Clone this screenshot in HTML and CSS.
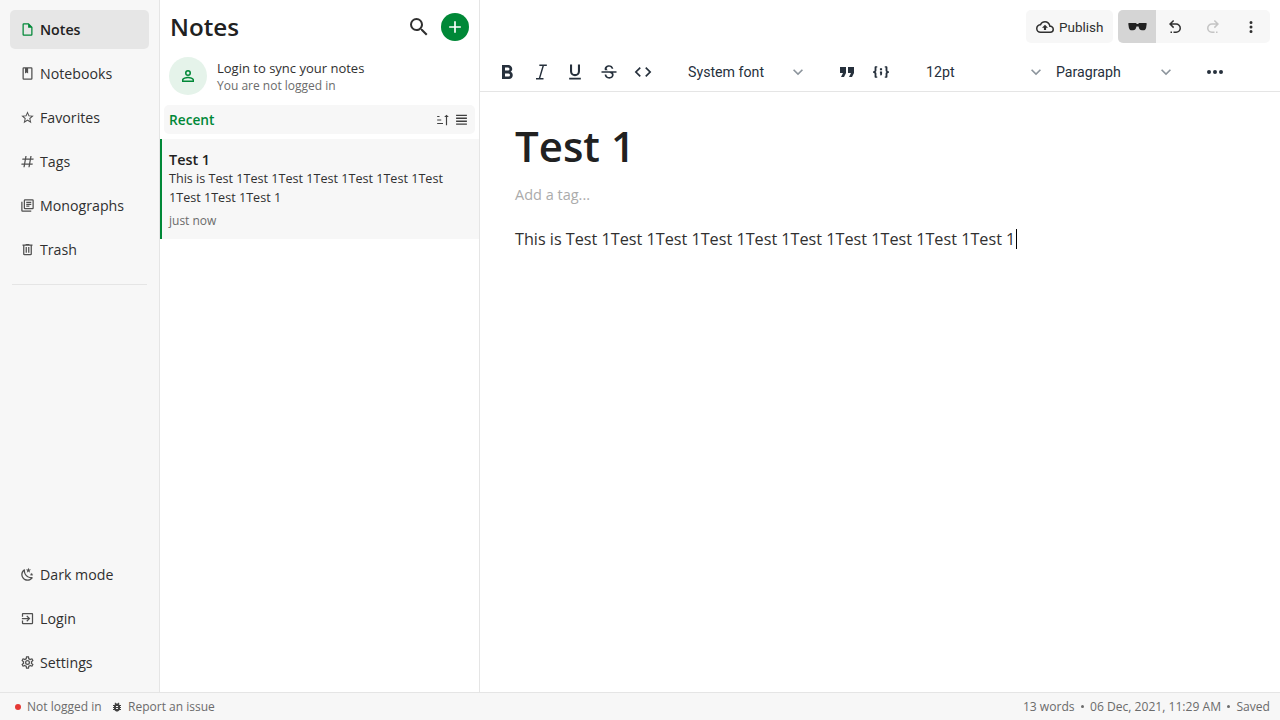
FILE: index.html
```html
<!DOCTYPE html>
<html lang="en">
<head>
<meta charset="utf-8">
<title>Notes</title>
<link rel="stylesheet" href="styles.css">
</head>
<body>
<div class="app">
  <div class="main">
    <nav class="nav">
      <a class="nav-item active"><svg class="nav-icon" viewBox="0 0 24 24"><path d="M14,2H6A2,2 0 0,0 4,4V20A2,2 0 0,0 6,22H18A2,2 0 0,0 20,20V8L14,2M18,20H6V4H13V9H18V20Z"/></svg><span>Notes</span></a>
      <a class="nav-item"><svg class="nav-icon" viewBox="0 0 24 24"><path d="M18,2H6A2,2 0 0,0 4,4V20A2,2 0 0,0 6,22H18A2,2 0 0,0 20,20V4A2,2 0 0,0 18,2M18,20H6V4H8V12L10.5,10.5L13,12V4H18V20Z"/></svg><span>Notebooks</span></a>
      <a class="nav-item"><svg class="nav-icon" viewBox="0 0 24 24"><path d="M12,15.39L8.24,17.66L9.23,13.38L5.91,10.5L10.29,10.13L12,6.09L13.71,10.13L18.09,10.5L14.77,13.38L15.76,17.66M22,9.24L14.81,8.63L12,2L9.19,8.63L2,9.24L7.45,13.97L5.82,21L12,17.27L18.18,21L16.54,13.97L22,9.24Z"/></svg><span>Favorites</span></a>
      <a class="nav-item"><svg class="nav-icon" viewBox="0 0 24 24"><path d="M5.41,21L6.12,17H2.12L2.47,15H6.47L7.53,9H3.53L3.88,7H7.88L8.59,3H10.59L9.88,7H15.88L16.59,3H18.59L17.88,7H21.88L21.53,9H17.53L16.47,15H20.47L20.12,17H16.12L15.41,21H13.41L14.12,17H8.12L7.41,21H5.41M9.53,9L8.47,15H14.47L15.53,9H9.53Z"/></svg><span>Tags</span></a>
      <a class="nav-item"><svg class="nav-icon" viewBox="0 0 24 24"><path d="M20 2H8A2 2 0 0 0 6 4V16A2 2 0 0 0 8 18H20A2 2 0 0 0 22 16V4A2 2 0 0 0 20 2M20 16H8V4H20V16M4 6H2V20A2 2 0 0 0 4 22H18V20H4V6M10 6H18V8H10V6M10 9H18V11H10V9M10 12H15V14H10V12Z"/></svg><span>Monographs</span></a>
      <a class="nav-item"><svg class="nav-icon" viewBox="0 0 24 24"><path d="M9,3V4H4V6H5V19A2,2 0 0,0 7,21H17A2,2 0 0,0 19,19V6H20V4H15V3H9M7,6H17V19H7V6M9,8V17H11V8H9M13,8V17H15V8H13Z"/></svg><span>Trash</span></a>
      <div class="nav-divider"></div>
      <div class="nav-spacer"></div>
      <a class="nav-item"><svg class="nav-icon" viewBox="0 0 24 24"><path d="M17.75,4.09L15.22,6.03L16.13,9.09L13.5,7.28L10.87,9.09L11.78,6.03L9.25,4.09L12.44,4L13.5,1L14.56,4L17.75,4.09M21.25,11L19.61,12.25L20.2,14.23L18.5,13.06L16.8,14.23L17.39,12.25L15.75,11L17.81,10.95L18.5,9L19.19,10.95L21.25,11M18.97,15.95C19.8,15.87 20.69,17.05 20.16,17.8C19.84,18.25 19.5,18.67 19.08,19.07C15.17,23 8.84,23 4.94,19.07C1.03,15.17 1.03,8.83 4.94,4.93C5.34,4.53 5.76,4.17 6.21,3.85C6.96,3.32 8.14,4.21 8.06,5.04C7.79,7.9 8.75,10.87 10.95,13.06C13.14,15.26 16.1,16.22 18.97,15.95M17.33,17.97C14.5,17.81 11.7,16.64 9.53,14.5C7.36,12.31 6.2,9.5 6.04,6.68C3.23,9.82 3.34,14.64 6.35,17.66C9.37,20.67 14.19,20.78 17.33,17.97Z"/></svg><span>Dark mode</span></a>
      <a class="nav-item"><svg class="nav-icon" viewBox="0 0 24 24"><path d="M19,3H5C3.89,3 3,3.89 3,5V9H5V5H19V19H5V15H3V19A2,2 0 0,0 5,21H19A2,2 0 0,0 21,19V5C21,3.89 20.1,3 19,3M10.08,15.58L11.5,17L16.5,12L11.5,7L10.08,8.41L12.67,11H3V13H12.67L10.08,15.58Z"/></svg><span>Login</span></a>
      <a class="nav-item"><svg class="nav-icon" viewBox="0 0 24 24"><path d="M12,8A4,4 0 0,1 16,12A4,4 0 0,1 12,16A4,4 0 0,1 8,12A4,4 0 0,1 12,8M12,10A2,2 0 0,0 10,12A2,2 0 0,0 12,14A2,2 0 0,0 14,12A2,2 0 0,0 12,10M10,22C9.75,22 9.54,21.82 9.5,21.58L9.13,18.93C8.5,18.68 7.96,18.34 7.44,17.94L4.95,18.95C4.73,19.03 4.46,18.95 4.34,18.73L2.34,15.27C2.21,15.05 2.27,14.78 2.46,14.63L4.57,12.97L4.5,12L4.57,11L2.46,9.37C2.27,9.22 2.21,8.95 2.34,8.73L4.34,5.27C4.46,5.05 4.73,4.96 4.95,5.05L7.44,6.05C7.96,5.66 8.5,5.32 9.13,5.07L9.5,2.42C9.54,2.18 9.75,2 10,2H14C14.25,2 14.46,2.18 14.5,2.42L14.87,5.07C15.5,5.32 16.04,5.66 16.56,6.05L19.05,5.05C19.27,4.96 19.54,5.05 19.66,5.27L21.66,8.73C21.79,8.95 21.73,9.22 21.54,9.37L19.43,11L19.5,12L19.43,13L21.54,14.63C21.73,14.78 21.79,15.05 21.66,15.27L19.66,18.73C19.54,18.95 19.27,19.04 19.05,18.95L16.56,17.95C16.04,18.34 15.5,18.68 14.87,18.93L14.5,21.58C14.46,21.82 14.25,22 14,22H10M11.25,4L10.88,6.61C9.68,6.86 8.62,7.5 7.85,8.39L5.44,7.35L4.69,8.65L6.8,10.2C6.4,11.37 6.4,12.64 6.8,13.8L4.68,15.36L5.43,16.66L7.86,15.62C8.63,16.5 9.68,17.14 10.87,17.38L11.24,20H12.76L13.13,17.39C14.32,17.14 15.37,16.5 16.14,15.62L18.57,16.66L19.32,15.36L17.2,13.81C17.6,12.64 17.6,11.37 17.2,10.2L19.31,8.65L18.56,7.35L16.15,8.39C15.38,7.5 14.32,6.86 13.12,6.62L12.75,4H11.25Z"/></svg><span>Settings</span></a>
    </nav>

    <section class="list">
      <header class="list-head">
        <h1 class="list-title">Notes</h1>
        <svg class="search-icon" viewBox="0 0 24 24"><path d="M9.5,3A6.5,6.5 0 0,1 16,9.5C16,11.11 15.41,12.59 14.44,13.73L14.71,14H15.5L20.5,19L19,20.5L14,15.5V14.71L13.73,14.44C12.59,15.41 11.11,16 9.5,16A6.5,6.5 0 0,1 3,9.5A6.5,6.5 0 0,1 9.5,3M9.5,5C7,5 5,7 5,9.5C5,12 7,14 9.5,14C12,14 14,12 14,9.5C14,7 12,5 9.5,5Z"/></svg>
        <button class="add-btn"><svg viewBox="0 0 24 24"><path d="M19,13H13V19H11V13H5V11H11V5H13V11H19V13Z"/></svg></button>
      </header>
      <div class="login">
        <div class="avatar"><svg viewBox="0 0 24 24"><path d="M12,4A4,4 0 0,1 16,8A4,4 0 0,1 12,12A4,4 0 0,1 8,8A4,4 0 0,1 12,4M12,6A2,2 0 0,0 10,8A2,2 0 0,0 12,10A2,2 0 0,0 14,8A2,2 0 0,0 12,6M12,13C14.67,13 20,14.33 20,17V20H4V17C4,14.33 9.33,13 12,13M12,14.9C9.03,14.9 5.9,16.36 5.9,17V18.1H18.1V17C18.1,16.36 14.97,14.9 12,14.9Z"/></svg></div>
        <div class="login-text">
          <div class="login-main">Login to sync your notes</div>
          <div class="login-sub">You are not logged in</div>
        </div>
      </div>
      <div class="group">
        <span class="group-name">Recent</span>
        <svg class="group-icon" viewBox="0 0 24 24"><path d="M19 7h3l-4-4-4 4h3v14h2zM2 17h10v2H2zM2 11h7v2H2zM2 5h4v2H2z"/></svg>
        <svg class="group-icon small" viewBox="0 0 24 24"><path d="M2 3h20v2.4H2zM2 8.5h20v2.4H2zM2 14h20v2.4H2zM2 19.500h20v2.400H2z"/></svg>
      </div>
      <article class="note">
        <div class="note-title">Test 1</div>
        <div class="note-body">This is Test 1Test 1Test 1Test 1Test 1Test 1Test 1Test 1Test 1Test 1</div>
        <div class="note-date">just now</div>
      </article>
    </section>

    <section class="editor">
      <div class="topbar">
        <button class="publish"><svg viewBox="0 0 24 24"><path d="M19.35,10.04C18.67,6.59 15.64,4 12,4C9.11,4 6.6,5.64 5.35,8.04C2.34,8.36 0,10.91 0,14A6,6 0 0,0 6,20H19A5,5 0 0,0 24,15C24,12.36 21.95,10.22 19.35,10.04M19,18H6A4,4 0 0,1 2,14C2,11.95 3.53,10.24 5.56,10.03L6.63,9.92L7.13,8.97C8.08,7.14 9.94,6 12,6C14.62,6 16.88,7.86 17.39,10.43L17.69,11.93L19.22,12.04C20.78,12.14 22,13.45 22,15A3,3 0 0,1 19,18M8,13H10.55V16H13.45V13H16L12,9L8,13Z"/></svg><span>Publish</span></button>
        <div class="actions">
          <button class="act on"><svg viewBox="0 0 24 24"><path d="M1.5 7.5H9.500C10.300 7.500 10.800 8 11.100 8.800H12.900C13.200 8 13.700 7.500 14.500 7.500H22.500C23.300 7.500 23.700 8 23.600 8.800L22.900 13.500C22.500 15.500 21 16.800 19.300 16.800H17.500C15.800 16.800 14.500 15.800 14 14.300L13.300 12H10.700L10 14.300C9.500 15.800 8.200 16.800 6.500 16.800H4.700C3 16.800 1.500 15.500 1.100 13.500L.4 8.800C.3 8 .7 7.500 1.500 7.500Z"/></svg></button>
          <button class="act"><svg viewBox="0 0 24 24"><path d="M13.5,7A6.5,6.5 0 0,1 20,13.5A6.5,6.5 0 0,1 13.5,20H10V18H13.5C16,18 18,16 18,13.5C18,11 16,9 13.5,9H7.83L10.91,12.09L9.5,13.5L4,8L9.5,2.5L10.92,3.91L7.83,7H13.5M6,18H8V20H6V18Z"/></svg></button>
          <button class="act off"><svg viewBox="0 0 24 24"><path d="M10.5,7A6.5,6.5 0 0,0 4,13.5A6.5,6.5 0 0,0 10.5,20H14V18H10.5C8,18 6,16 6,13.5C6,11 8,9 10.5,9H16.17L13.09,12.09L14.5,13.5L20,8L14.5,2.5L13.08,3.91L16.17,7H10.5M18,18H16V20H18V18Z"/></svg></button>
          <button class="act"><svg viewBox="0 0 24 24"><path d="M12,16A2,2 0 0,1 14,18A2,2 0 0,1 12,20A2,2 0 0,1 10,18A2,2 0 0,1 12,16M12,10A2,2 0 0,1 14,12A2,2 0 0,1 12,14A2,2 0 0,1 10,12A2,2 0 0,1 12,10M12,4A2,2 0 0,1 14,6A2,2 0 0,1 12,8A2,2 0 0,1 10,6A2,2 0 0,1 12,4Z"/></svg></button>
        </div>
      </div>
      <div class="toolbar">
        <button class="tool big"><svg viewBox="0 0 24 24"><path d="M13.5,15.5H10V12.5H13.5A1.5,1.5 0 0,1 15,14A1.5,1.5 0 0,1 13.5,15.5M10,6.5H13A1.5,1.5 0 0,1 14.5,8A1.5,1.5 0 0,1 13,9.5H10M15.6,10.79C16.57,10.11 17.25,9 17.25,8C17.25,5.74 15.5,4 13.25,4H7V18H14.04C16.14,18 17.75,16.3 17.75,14.21C17.75,12.69 16.89,11.39 15.6,10.79Z" transform="translate(0 1)"/></svg></button>
        <button class="tool"><svg viewBox="0 0 24 24"><path d="M10 3h9v1.800h-3.500L11.200 19.200H15V21H6v-1.800h3.400L13.700 4.800H10z"/></svg></button>
        <button class="tool"><svg viewBox="0 0 24 24"><path d="M5,21H19V19H5V21M12,17A6,6 0 0,0 18,11V3H15.5V11A3.5,3.5 0 0,1 12,14.5A3.5,3.5 0 0,1 8.5,11V3H6V11A6,6 0 0,0 12,17Z"/></svg></button>
        <button class="tool"><svg viewBox="0 0 24 24"><path d="M7.2 9.8C6 7.5 7.7 4.8 10.1 4.2C13.2 3.3 16.6 4.7 17.2 8H15.2C15 7.2 14.6 6.6 14 6.2C13 5.6 11.5 5.6 10.5 6.1C8.6 7 9.1 9.3 10.6 10H7.2M21 11H3V13H12.6C13 13.1 13.5 13.3 13.9 13.4C14.6 13.8 15.1 14.2 15.3 14.7C15.5 15.2 15.5 15.9 15.3 16.4C15.1 17 14.6 17.4 14 17.7C12.8 18.3 11 18.2 10 17.4C9.3 16.9 8.8 16 8.8 15.1H6.8C6.8 17.5 8.8 19.5 11.1 19.9C14.5 20.5 18 18.5 17.5 14.8C17.4 14.1 17.2 13.5 16.8 13H21V11Z"/></svg></button>
        <button class="tool"><svg viewBox="0 0 24 24"><path d="M14.6,16.6L19.2,12L14.6,7.4L16,6L22,12L16,18L14.6,16.6M9.4,16.6L4.8,12L9.4,7.4L8,6L2,12L8,18L9.4,16.6Z"/></svg></button>
        <div class="select sel-font"><span>System font</span><svg viewBox="0 0 24 24"><path d="M7.41,8.58L12,13.17L16.59,8.58L18,10L12,16L6,10L7.41,8.58Z"/></svg></div>
        <button class="tool gap big"><svg viewBox="0 0 24 24"><path d="M14,17H17L19,13V7H13V13H16M6,17H9L11,13V7H5V13H8L6,17Z"/></svg></button>
        <button class="tool"><svg viewBox="0 0 24 24"><path d="M5.500 5H7.500V6.500H6.500V10.500C6.500 11.200 6 11.700 5.300 12C6 12.300 6.500 12.800 6.500 13.500V17.500H7.500V19H5.500C4.700 19 4.300 18.400 4.300 17.700V14.200C4.300 13.500 3.800 12.900 2.500 12.800V11.200C3.800 11.100 4.300 10.500 4.300 9.800V6.300C4.300 5.600 4.700 5 5.500 5M18.500 5C19.300 5 19.700 5.600 19.700 6.300V9.800C19.700 10.500 20.200 11.100 21.500 11.200V12.800C20.200 12.900 19.700 13.500 19.700 14.200V17.700C19.700 18.400 19.300 19 18.500 19H16.500V17.500H17.500V13.500C17.500 12.800 18 12.300 18.700 12C18 11.700 17.500 11.200 17.500 10.500V6.500H16.500V5H18.500M10.700 7.500H13.300V10H10.700V7.500M10.700 11.500H13.300V14C13.300 15.300 12.600 16 11.500 16.300L10.700 15C11.200 14.800 11.500 14.500 11.600 14H10.700V11.500Z"/></svg></button>
        <div class="select sel-size"><span>12pt</span><svg viewBox="0 0 24 24"><path d="M7.41,8.58L12,13.17L16.59,8.58L18,10L12,16L6,10L7.41,8.58Z"/></svg></div>
        <div class="select sel-para"><span>Paragraph</span><svg viewBox="0 0 24 24"><path d="M7.41,8.58L12,13.17L16.59,8.58L18,10L12,16L6,10L7.41,8.58Z"/></svg></div>
        <button class="tool gap big"><svg viewBox="0 0 24 24"><path d="M16,12A2,2 0 0,1 18,10A2,2 0 0,1 20,12A2,2 0 0,1 18,14A2,2 0 0,1 16,12M10,12A2,2 0 0,1 12,10A2,2 0 0,1 14,12A2,2 0 0,1 12,14A2,2 0 0,1 10,12M4,12A2,2 0 0,1 6,10A2,2 0 0,1 8,12A2,2 0 0,1 6,14A2,2 0 0,1 4,12Z"/></svg></button>
      </div>
      <div class="doc">
        <h2 class="doc-title">Test 1</h2>
        <div class="doc-tag">Add a tag...</div>
        <p class="doc-body"><span class="doc-text">This is Test 1Test 1Test 1Test 1Test 1Test 1Test 1Test 1Test 1Test 1</span><span class="caret"></span></p>
      </div>
    </section>
  </div>

  <footer class="status">
    <span class="dot"></span><span>Not logged in</span>
    <svg class="bug" viewBox="0 0 24 24"><path d="M14,12H10V10H14M14,16H10V14H14M20,8H17.19C16.74,7.22 16.12,6.55 15.37,6.04L17,4.41L15.59,3L13.42,5.17C12.96,5.06 12.5,5 12,5C11.5,5 11.04,5.06 10.59,5.17L8.41,3L7,4.41L8.62,6.04C7.88,6.55 7.26,7.22 6.81,8H4V10H6.09C6.04,10.33 6,10.66 6,11V12H4V14H6V15C6,15.34 6.04,15.67 6.09,16H4V18H6.81C7.85,19.79 9.78,21 12,21C14.22,21 16.15,19.79 17.19,18H20V16H17.91C17.96,15.67 18,15.34 18,15V14H20V12H18V11C18,10.66 17.96,10.33 17.91,10H20V8Z"/></svg>
    <span>Report an issue</span>
    <span class="status-right">13 words<i class="sep"></i>06 Dec, 2021, 11:29 AM<i class="sep"></i>Saved</span>
  </footer>
</div>
</body>
</html>
```
FILE: styles.css
```css
* { box-sizing: border-box; }
html, body { margin: 0; height: 100%; overflow: hidden; }
body { font-family: "Open Sans", "Noto Sans", sans-serif; color: #212121; background: #fff; }
button { font: inherit; color: inherit; border: 0; background: none; padding: 0; }
svg { fill: currentColor; display: block; flex: none; }
h1, h2, p { margin: 0; font-weight: inherit; }

.app { display: flex; flex-direction: column; height: 720px; }
.main { display: flex; flex: 1; min-height: 0; }

/* sidebar */
.nav { width: 160px; flex: none; display: flex; flex-direction: column; background: #f7f7f7; border-right: 1px solid #e5e5e5; padding: 10px 10px 5px 10px; }
.nav-item { height: 39px; margin-bottom: 5px; display: flex; align-items: center; padding-left: 10px; gap: 5px; border-radius: 5px; font-size: 14.2px; color: #303030; flex: none; }
.nav-icon { width: 15px; height: 15px; color: #505050; }
.nav-item.active { background: #e6e6e6; font-weight: 600; color: #212121; }
.nav-item.active .nav-icon { color: #008837; }
.nav-divider { height: 1px; background: #e5e5e5; margin: 10px 2px 0; }
.nav-spacer { flex: 1; }

/* list */
.list { width: 320px; flex: none; border-right: 1px solid #e5e5e5; display: flex; flex-direction: column; }
.list-head { height: 57px; flex: none; display: flex; align-items: center; padding: 0 10px 3px 10px; }
.list-title { font-size: 24.2px; font-weight: 600; line-height: 32px; flex: 1; color: #212121; }
.search-icon { width: 24px; height: 24px; margin-right: 10px; color: #303030; }
.add-btn { width: 28px; height: 28px; border-radius: 50%; background: #008837; color: #fff; display: flex; align-items: center; justify-content: center; }
.add-btn svg { width: 20px; height: 20px; }
.login { display: flex; align-items: center; gap: 10px; padding-left: 9px; height: 38px; flex: none; }
.avatar { width: 38px; height: 38px; border-radius: 50%; background: #e5f3ea; color: #008837; display: flex; align-items: center; justify-content: center; }
.avatar svg { width: 18px; height: 18px; }
.login-text { padding-top: 2px; }
.login-main { font-size: 13px; line-height: 17px; color: #303030; }
.login-sub { font-size: 12px; line-height: 17px; color: #6b6b6b; }
.group { margin: 10px 4px 0; height: 29px; flex: none; background: #f7f7f7; border-radius: 5px; display: flex; align-items: center; padding: 0 7px 0 5px; gap: 5px; }
.group-name { font-size: 13.7px; line-height: 18px; font-weight: 600; color: #008837; flex: 1; }
.group-icon { width: 14px; height: 14px; color: #404040; }
.group-icon.small { width: 13px; height: 13px; }
.note { margin-top: 5px; height: 100px; background: #f7f7f7; border-left: 2px solid #008837; padding: 11px 28px 0 7px; flex: none; }
.note-title { font-size: 14.4px; font-weight: 600; line-height: 19px; color: #212121; }
.note-body { font-size: 12.6px; line-height: 19px; color: #303030; }
.note-date { font-size: 12px; line-height: 16px; margin-top: 6px; color: #6b6b6b; }

/* editor */
.editor { flex: 1; min-width: 0; display: flex; flex-direction: column; }
.topbar { height: 53px; flex: none; display: flex; justify-content: flex-end; padding: 10px 10px 0 0; gap: 5px; }
.publish { width: 87px; height: 33px; background: #f7f7f7; border-radius: 5px; display: flex; align-items: center; padding-left: 10px; gap: 5px; font-family: Roboto, sans-serif; font-size: 13.5px; color: #303030; }
.publish svg { width: 18px; height: 18px; }
.actions { display: flex; height: 33px; border-radius: 5px; overflow: hidden; background: #f7f7f7; }
.act { width: 38px; height: 33px; display: flex; align-items: center; justify-content: center; color: #303030; }
.act svg { width: 18px; height: 18px; }
.act.on { background: #d5d5d5; }
.act.on svg { width: 19px; height: 19px; color: #212121; }
.act.off { color: #c4c4c4; }

.toolbar { height: 39px; flex: none; display: flex; align-items: center; padding: 0 0 1px 10px; border-bottom: 1px solid #e5e5e5; font-family: Roboto, sans-serif; font-size: 14.2px; color: #303030; }
.tool { width: 34px; height: 30px; display: flex; align-items: center; justify-content: center; color: #26303c; }
.tool svg { width: 20px; height: 20px; }
.tool.big svg { width: 24px; height: 24px; }
.tool.gap { margin-left: 22px; }
.select { width: 120px; height: 20px; line-height: 20px; margin-left: 28px; display: flex; align-items: center; justify-content: space-between; color: #26303c; }
.select svg { width: 20px; height: 20px; color: #8c949c; }
.sel-para { margin-left: 10px; }

.doc { flex: 1; padding: 26px 35px 0; }
.doc-title { font-size: 42px; font-weight: 600; line-height: 56px; color: #212121; }
.doc-tag { font-size: 14.5px; line-height: 20px; margin-top: 11px; color: #ababab; }
.doc-body { margin-top: 24px; font-size: 16.2px; line-height: 20px; color: #303030; white-space: nowrap; display: flex; align-items: center; }
.caret { width: 1px; height: 20px; background: #000; margin-left: 1px; }

/* status */
.status { height: 28px; flex: none; background: #f7f7f7; border-top: 1px solid #e5e5e5; display: flex; align-items: center; padding: 0 10px 0 15px; font-size: 12px; color: #6b6b6b; }
.dot { width: 6px; height: 6px; border-radius: 50%; background: #e53935; margin-right: 6px; }
.bug { width: 12px; height: 12px; margin: 0 5.500px 0 9px; color: #404040; }
.status-right { margin-left: auto; display: flex; align-items: center; font-size: 12.1px; }
.sep { width: 3px; height: 3px; border-radius: 50%; background: #6b6b6b; margin: 0 6.200px; }
```
